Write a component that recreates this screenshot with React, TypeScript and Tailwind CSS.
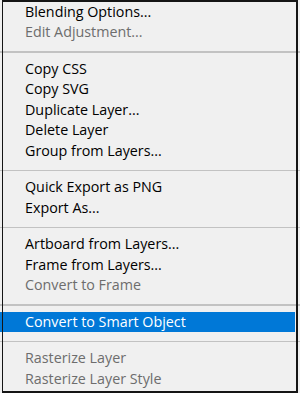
import React from 'react'

type Item =
  | { kind: 'item'; label: string; disabled?: boolean; active?: boolean }
  | { kind: 'sep' }

const items: Item[] = [
  { kind: 'item', label: 'Blending Options...' },
  { kind: 'item', label: 'Edit Adjustment...', disabled: true },
  { kind: 'sep' },
  { kind: 'item', label: 'Copy CSS' },
  { kind: 'item', label: 'Copy SVG' },
  { kind: 'item', label: 'Duplicate Layer...' },
  { kind: 'item', label: 'Delete Layer' },
  { kind: 'item', label: 'Group from Layers...' },
  { kind: 'sep' },
  { kind: 'item', label: 'Quick Export as PNG' },
  { kind: 'item', label: 'Export As...' },
  { kind: 'sep' },
  { kind: 'item', label: 'Artboard from Layers...' },
  { kind: 'item', label: 'Frame from Layers...' },
  { kind: 'item', label: 'Convert to Frame', disabled: true },
  { kind: 'sep' },
  { kind: 'item', label: 'Convert to Smart Object', active: true },
  { kind: 'sep' },
  { kind: 'item', label: 'Rasterize Layer', disabled: true },
  { kind: 'item', label: 'Rasterize Layer Style', disabled: true },
]

const MenuRow = ({ item }: { item: Item }) => {
  if (item.kind === 'sep') {
    return (
      <div className="pt-[8.5px] pb-[6px]">
        <div className="h-[1.5px] bg-[#c2c2c2]" />
      </div>
    )
  }

  if (item.active) {
    return (
      <div className="mr-[5px] flex h-[20.5px] items-center bg-[#0078d7] pl-[25px] leading-[20.5px] text-white">
        {item.label}
      </div>
    )
  }

  return (
    <div
      className={
        item.disabled
          ? 'flex h-[20.5px] items-center pl-[25px] leading-[20.5px] text-[#6d6d6d]'
          : 'flex h-[20.5px] items-center pl-[25px] leading-[20.5px] text-[#000000]'
      }
    >
      {item.label}
    </div>
  )
}

export default function App() {
  return (
    <div
      className="relative h-[393px] w-[300px] overflow-hidden bg-[#f0f0f0] text-[14.3px]"
      style={{ fontFamily: '"Open Sans", "Noto Sans", sans-serif' }}
    >
      <div className="flex flex-col pt-[1.5px]">
        {items.map((item, i) => (
          <MenuRow key={i} item={item} />
        ))}
      </div>

      {/* menu frame, drawn over the rows */}
      <div className="pointer-events-none absolute inset-y-0 left-[2px] w-[295.5px] border-t-2 border-r-[2.5px] border-b-2 border-l-[1.5px] border-[#151515]" />
    </div>
  )
}
